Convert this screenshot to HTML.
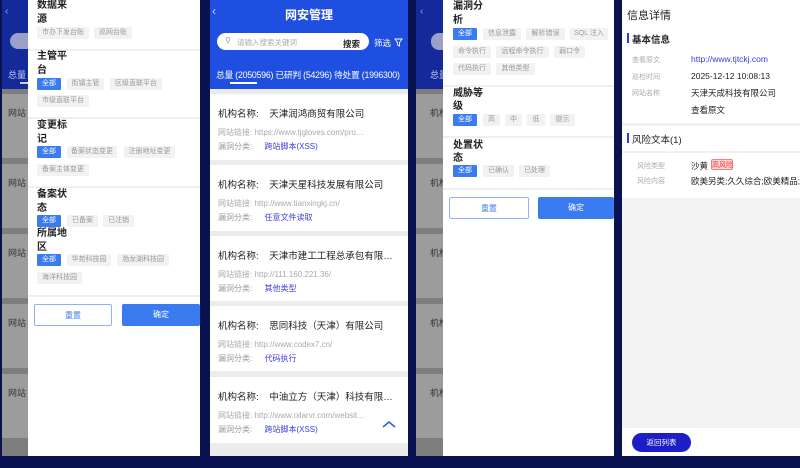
<!DOCTYPE html>
<html><head><meta charset="utf-8"><style>
*{margin:0;padding:0;box-sizing:border-box}
body{width:800px;height:468px;background:#0a1352;position:relative;overflow:hidden;font-family:"Liberation Sans","Noto Sans CJK SC",sans-serif;}
.a{position:absolute;white-space:nowrap}
.p{position:absolute;overflow:hidden}
.h{font-size:10px;font-weight:bold;color:#222;line-height:12px}
.t{position:absolute;height:12px;line-height:12px;font-size:7px;color:#999;background:#f2f2f2;text-align:center;border-radius:1px}
.t.on{background:#3a7bf0;color:#fff}
.dv{position:absolute;height:2px;background:#efefef}
.btn{position:absolute;height:22px;line-height:22px;text-align:center;font-size:8px;border-radius:2px}
.b1{border:1px solid #8fb2f5;color:#3a7bf0;background:#fff}
.b2{background:#3a7bf0;color:#fff}
.card{position:absolute;left:0;width:198px;background:#fff}
.card .n{position:absolute;left:8px;top:12px;font-size:9.5px;color:#222}
.card .l{position:absolute;left:8px;top:33px;font-size:8px;color:#aaa}
.card .c{position:absolute;left:8px;top:47px;font-size:8px;color:#999}
.card .c b{font-weight:normal;color:#3d3ddb;margin-left:10px}
.dim .hd{position:absolute;left:0;top:0;width:100%;height:89px;background:#142a9a}
.dim .ls{position:absolute;left:0;top:89px;width:100%;bottom:0;background:#7e7e7e}
.dim .cd{position:absolute;left:0;width:100%;height:64px;background:#9c9c9c}
.lab{font-size:7px;color:#aaa}
.val{font-size:8.5px;color:#222}
</style></head><body>

<!-- Panel 1 -->
<div class="p dim" style="left:2px;top:0;width:198px;height:456px;">
  <div class="hd"></div>
  <div class="a" style="left:3px;top:6px;color:#aab;font-size:10px">‹</div>
  <div class="a" style="left:8px;top:33px;width:40px;height:16px;border-radius:8px;background:#9aa0c8"></div>
  <div class="a" style="left:6px;top:68px;color:#c5cbf0;font-size:9px">总量</div>
  <div class="a" style="left:18px;top:82px;width:14px;height:2px;background:#ccd"></div>
  <div class="ls"></div>
  <div class="cd" style="top:94px"></div><div class="cd" style="top:164px"></div><div class="cd" style="top:234px"></div><div class="cd" style="top:304px"></div><div class="cd" style="top:374px"></div>
  <div class="a" style="left:6px;top:106px;font-size:9px;color:#333">网站</div>
  <div class="a" style="left:6px;top:176px;font-size:9px;color:#333">网站</div>
  <div class="a" style="left:6px;top:246px;font-size:9px;color:#333">网站</div>
  <div class="a" style="left:6px;top:316px;font-size:9px;color:#333">网站</div>
  <div class="a" style="left:6px;top:386px;font-size:9px;color:#333">网站</div>
  <div class="a" style="left:26px;top:0;width:172px;height:456px;background:#fff"></div>
</div>
<div class="p" style="left:28px;top:0;width:172px;height:456px;">
  <div class="a h" style="left:9px;top:0">数据来</div><div class="a h" style="left:9px;top:14px">源</div>
  <div class="t" style="left:9px;top:27px;width:52px">市办下发台账</div><div class="t" style="left:66px;top:27px;width:38px">巡网台账</div>
  <div class="dv" style="left:0;top:49px;width:172px"></div>
  <div class="a h" style="left:9px;top:51px">主管平</div><div class="a h" style="left:9px;top:65px">台</div>
  <div class="t on" style="left:9px;top:78px;width:24px">全部</div><div class="t" style="left:39px;top:78px;width:37px">街镇主管</div><div class="t" style="left:82px;top:78px;width:52px">区级直联平台</div>
  <div class="t" style="left:9px;top:95px;width:52px">市级直联平台</div>
  <div class="dv" style="left:0;top:117px;width:172px"></div>
  <div class="a h" style="left:9px;top:120px">变更标</div><div class="a h" style="left:9px;top:134px">记</div>
  <div class="t on" style="left:9px;top:146px;width:24px">全部</div><div class="t" style="left:39px;top:146px;width:50px">备案状态变更</div><div class="t" style="left:96px;top:146px;width:51px">注册地址变更</div>
  <div class="t" style="left:9px;top:164px;width:52px">备案主体变更</div>
  <div class="dv" style="left:0;top:186px;width:172px"></div>
  <div class="a h" style="left:9px;top:189px">备案状</div><div class="a h" style="left:9px;top:203px">态</div>
  <div class="t on" style="left:9px;top:215px;width:24px">全部</div><div class="t" style="left:39px;top:215px;width:31px">已备案</div><div class="t" style="left:75px;top:215px;width:31px">已注销</div>
  <div class="a h" style="left:9px;top:228px">所属地</div><div class="a h" style="left:9px;top:242px">区</div>
  <div class="t on" style="left:9px;top:254px;width:24px">全部</div><div class="t" style="left:39px;top:254px;width:44px">华苑科技园</div><div class="t" style="left:89px;top:254px;width:52px">渤龙湖科技园</div>
  <div class="t" style="left:9px;top:272px;width:45px">海洋科技园</div>
  <div class="dv" style="left:0;top:295px;width:172px"></div>
  <div class="btn b1" style="left:6px;top:304px;width:78px">重置</div>
  <div class="btn b2" style="left:94px;top:304px;width:78px">确定</div>
</div>

<!-- Panel 2 -->
<div class="p" style="left:210px;top:0;width:198px;height:456px;background:#ececec">
  <div class="a" style="left:0;top:0;width:198px;height:89px;background:#1f4fe0"></div>
  <div class="a" style="left:2px;top:4px;color:#dde;font-size:12px">‹</div>
  <div class="a" style="left:0;top:6px;width:198px;text-align:center;color:#fff;font-size:12px;font-weight:bold">网安管理</div>
  <div class="a" style="left:7px;top:33px;width:152px;height:17px;border-radius:9px;background:#fff"></div>
  <div class="a" style="left:15px;top:36px;font-size:8px;color:#999">⚲</div>
  <div class="a" style="left:27px;top:37px;font-size:7.5px;color:#aaa">请输入搜索关键词</div>
  <div class="a" style="left:133px;top:38px;font-size:8.5px;color:#222;font-weight:bold">搜索</div>
  <div class="a" style="left:164px;top:37px;font-size:8.5px;color:#fff">筛选</div>
  <svg class="a" style="left:184px;top:38px" width="10" height="10" viewBox="0 0 10 10"><path d="M1 1H8L5.5 4.5V8L3.5 7V4.5Z" fill="none" stroke="#fff" stroke-width="0.9"/></svg>
  <div class="a" style="left:6px;top:68px;font-size:8.8px;letter-spacing:-0.25px;color:#fff">总量 (2050596) 已研判 (54296) 待处置 (1996300)</div>
  <div class="a" style="left:20px;top:82px;width:27px;height:2px;background:#fff"></div>
  <div class="card" style="top:94px;height:66px"><div class="n">机构名称:&nbsp;&nbsp;&nbsp; 天津润鸿商贸有限公司</div><div class="l">网站链接: https://www.tjgloves.com/pro…</div><div class="c">漏洞分类: <b>跨站脚本(XSS)</b></div></div>
  <div class="card" style="top:165px;height:66px"><div class="n">机构名称:&nbsp;&nbsp;&nbsp; 天津天星科技发展有限公司</div><div class="l">网站链接: http://www.tianxingkj.cn/</div><div class="c">漏洞分类: <b>任意文件读取</b></div></div>
  <div class="card" style="top:236px;height:65px"><div class="n">机构名称:&nbsp;&nbsp;&nbsp; 天津市建工工程总承包有限…</div><div class="l">网站链接: http://111.160.221.36/</div><div class="c">漏洞分类: <b>其他类型</b></div></div>
  <div class="card" style="top:306px;height:65px"><div class="n">机构名称:&nbsp;&nbsp;&nbsp; 思同科技（天津）有限公司</div><div class="l">网站链接: http://www.codex7.cn/</div><div class="c">漏洞分类: <b>代码执行</b></div></div>
  <div class="card" style="top:377px;height:66px"><div class="n">机构名称:&nbsp;&nbsp;&nbsp; 中油立方（天津）科技有限…</div><div class="l">网站链接: http://www.oilarvr.com/websit…</div><div class="c">漏洞分类: <b>跨站脚本(XSS)</b></div></div>
  <svg class="a" style="left:172px;top:420px" width="14" height="9" viewBox="0 0 14 9"><path d="M1 7L7 2L13 7" fill="none" stroke="#2a5bd8" stroke-width="1.5"/></svg>
</div>

<!-- Panel 3 -->
<div class="p dim" style="left:416px;top:0;width:198px;height:456px;">
  <div class="hd"></div>
  <div class="a" style="left:4px;top:6px;color:#aab;font-size:10px">‹</div>
  <div class="a" style="left:15px;top:33px;width:40px;height:17px;border-radius:8px;background:#9aa0c8"></div>
  <div class="a" style="left:14px;top:68px;color:#c5cbf0;font-size:9px">总量</div>
  <div class="ls"></div>
  <div class="cd" style="top:94px"></div><div class="cd" style="top:164px"></div><div class="cd" style="top:234px"></div><div class="cd" style="top:304px"></div><div class="cd" style="top:374px"></div>
  <div class="a" style="left:14px;top:106px;font-size:9px;color:#333">机构</div>
  <div class="a" style="left:14px;top:176px;font-size:9px;color:#333">机构</div>
  <div class="a" style="left:14px;top:246px;font-size:9px;color:#333">机构</div>
  <div class="a" style="left:14px;top:316px;font-size:9px;color:#333">机构</div>
  <div class="a" style="left:14px;top:386px;font-size:9px;color:#333">机构</div>
</div>
<div class="p" style="left:443px;top:0;width:171px;height:456px;background:#fff">
  <div class="a h" style="left:10px;top:1px">漏洞分</div><div class="a h" style="left:10px;top:15px">析</div>
  <div class="t on" style="left:10px;top:28px;width:24px">全部</div><div class="t" style="left:40px;top:28px;width:38px">信息泄露</div><div class="t" style="left:83px;top:28px;width:39px">解析错误</div><div class="t" style="left:127px;top:28px;width:38px">SQL 注入</div>
  <div class="t" style="left:10px;top:46px;width:38px">命令执行</div><div class="t" style="left:53px;top:46px;width:53px">远程命令执行</div><div class="t" style="left:111px;top:46px;width:31px">弱口令</div>
  <div class="t" style="left:10px;top:63px;width:38px">代码执行</div><div class="t" style="left:53px;top:63px;width:39px">其他类型</div>
  <div class="dv" style="left:0;top:85px;width:171px"></div>
  <div class="a h" style="left:10px;top:88px">威胁等</div><div class="a h" style="left:10px;top:101px">级</div>
  <div class="t on" style="left:10px;top:114px;width:24px">全部</div><div class="t" style="left:40px;top:114px;width:17px">高</div><div class="t" style="left:62px;top:114px;width:17px">中</div><div class="t" style="left:84px;top:114px;width:18px">低</div><div class="t" style="left:107px;top:114px;width:25px">提示</div>
  <div class="dv" style="left:0;top:136px;width:171px"></div>
  <div class="a h" style="left:10px;top:140px">处置状</div><div class="a h" style="left:10px;top:153px">态</div>
  <div class="t on" style="left:10px;top:165px;width:24px">全部</div><div class="t" style="left:40px;top:165px;width:31px">已确认</div><div class="t" style="left:76px;top:165px;width:31px">已处理</div>
  <div class="dv" style="left:0;top:188px;width:171px"></div>
  <div class="btn b1" style="left:6px;top:197px;width:80px">重置</div>
  <div class="btn b2" style="left:95px;top:197px;width:76px">确定</div>
</div>

<!-- Panel 4 -->
<div class="p" style="left:622px;top:0;width:178px;height:456px;background:#f3f3f3">
  <div class="a" style="left:0;top:0;width:178px;height:198px;background:#fff"></div>
  <div class="a" style="left:5px;top:7px;font-size:11px;color:#222">信息详情</div>
  <div class="a" style="left:5px;top:33px;width:2px;height:10px;background:#3a3ad8"></div>
  <div class="a" style="left:10px;top:32px;font-size:9.5px;color:#222;font-weight:bold">基本信息</div>
  <div class="a lab" style="left:10px;top:55px">查看原文</div>
  <div class="a lab" style="left:10px;top:72px">巡检时间</div>
  <div class="a lab" style="left:10px;top:88px">网站名称</div>
  <div class="a val" style="left:69px;top:54px;color:#3a3ad8">http://www.tjtckj.com</div>
  <div class="a val" style="left:69px;top:71px">2025-12-12 10:08:13</div>
  <div class="a val" style="left:69px;top:87px">天津天成科技有限公司</div>
  <div class="a val" style="left:69px;top:104px">查看原文</div>
  <div class="a" style="left:0;top:123px;width:178px;height:3px;background:#f0f0f0"></div>
  <div class="a" style="left:5px;top:133px;width:2px;height:10px;background:#3a3ad8"></div>
  <div class="a" style="left:10px;top:132px;font-size:9.5px;color:#222">风险文本(1)</div>
  <div class="a" style="left:0;top:151px;width:178px;height:2px;background:#f0f0f0"></div>
  <div class="a lab" style="left:15px;top:161px">风险类型</div>
  <div class="a lab" style="left:15px;top:176px">风险内容</div>
  <div class="a val" style="left:69px;top:160px">沙黄</div>
  <div class="a" style="left:89px;top:159px;width:22px;height:11px;line-height:11px;font-size:7px;color:#e33;background:#fcd6d6;border:1px solid #f08080;border-radius:2px;text-align:center">高风险</div>
  <div class="a val" style="left:69px;top:175px">欧美另类;久久综合;欧美精品;…</div>
  <div class="a" style="left:0;top:428px;width:178px;height:28px;background:#fff"></div>
  <div class="a" style="left:10px;top:433px;width:59px;height:19px;line-height:19px;border-radius:10px;background:#1e1ec8;color:#fff;font-size:7.5px;text-align:center">返回列表</div>
</div>
</body></html>
